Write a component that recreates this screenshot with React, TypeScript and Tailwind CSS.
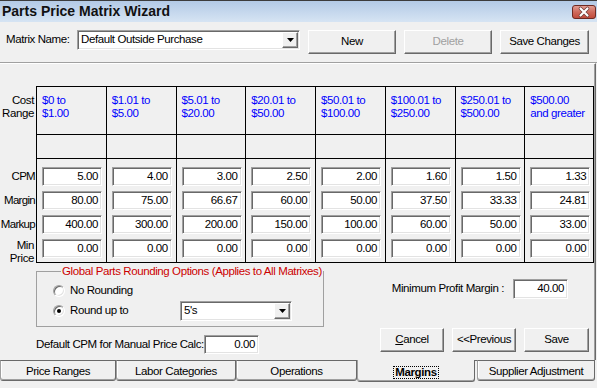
import type { ReactNode } from "react";

const sunken =
  "border border-t-[#a0a0a0] border-l-[#a0a0a0] border-b-white border-r-white bg-white shadow-[inset_1px_1px_0_#696969,inset_-1px_-1px_0_#e3e3e3]";
const raised =
  "border border-t-white border-l-white border-b-[#696969] border-r-[#696969] bg-[#f0f0f0] shadow-[inset_-1px_-1px_0_#a0a0a0]";

const ranges = [
  ["$0 to", "$1.00"],
  ["$1.01 to", "$5.00"],
  ["$5.01 to", "$20.00"],
  ["$20.01 to", "$50.00"],
  ["$50.01 to", "$100.00"],
  ["$100.01 to", "$250.00"],
  ["$250.01 to", "$500.00"],
  ["$500.00", "and greater"],
];

const cpm = ["5.00", "4.00", "3.00", "2.50", "2.00", "1.60", "1.50", "1.33"];
const margin = ["80.00", "75.00", "66.67", "60.00", "50.00", "37.50", "33.33", "24.81"];
const markup = ["400.00", "300.00", "200.00", "150.00", "100.00", "60.00", "50.00", "33.00"];
const minPrice = ["0.00", "0.00", "0.00", "0.00", "0.00", "0.00", "0.00", "0.00"];

function NumBox({ value, className = "" }: { value: string; className?: string }) {
  return (
    <div className={`${sunken} flex h-[19px] items-center justify-end pr-[3px] ${className}`}>
      {value}
    </div>
  );
}

function Button({ children, disabled, className = "" }: { children: ReactNode; disabled?: boolean; className?: string }) {
  return (
    <div
      className={`${raised} flex h-[24px] items-center justify-center ${disabled ? "text-[#a0a0a0]" : "text-black"} ${className}`}
    >
      {children}
    </div>
  );
}

function Combo({ value, className = "" }: { value: string; className?: string }) {
  return (
    <div className={`${sunken} flex h-[20px] items-center justify-between pl-[3px] pr-[1px] ${className}`}>
      <span>{value}</span>
      <div className={`${raised} flex h-[16px] w-[16px] items-center justify-center`}>
        <svg width="7" height="4" viewBox="0 0 7 4">
          <path d="M0 0h7L3.5 4z" fill="#000" />
        </svg>
      </div>
    </div>
  );
}

function Radio({ checked }: { checked?: boolean }) {
  return (
    <span className="flex h-[12px] w-[12px] items-center justify-center rounded-full border border-t-[#a0a0a0] border-l-[#a0a0a0] border-b-white border-r-white bg-white shadow-[inset_1px_1px_0_#696969,inset_-1px_-1px_0_#e3e3e3]">
      {checked ? <span className="h-[4px] w-[4px] rounded-full bg-black" /> : null}
    </span>
  );
}

function Tab({ label, width, selected }: { label: string; width: string; selected?: boolean }) {
  if (selected) {
    return (
      <div
        className={`${width} flex h-[22px] items-start justify-center rounded-b-[3px] border border-t-0 border-l-[#a0a0a0] border-r-[#696969] border-b-[#696969] bg-[#f0f0f0] pt-[6px] shadow-[inset_0_-1px_0_#a0a0a0]`}
      >
        <span className="border border-dotted border-black px-[1px] leading-[11px] font-bold">{label}</span>
      </div>
    );
  }
  return (
    <div
      className={`${width} flex h-[21px] items-start justify-center rounded-b-[3px] border border-t-[#696969] border-l-[#a0a0a0] border-r-[#696969] border-b-[#696969] bg-[#f0f0f0] pt-[4px] leading-[13px] shadow-[inset_0_-1px_0_#a0a0a0,inset_1px_0_0_white]`}
    >
      {label}
    </div>
  );
}

export default function App() {
  const labelRows = ["CPM", "Margin", "Markup"];

  return (
    <div
      className="h-[388px] w-[597px] overflow-hidden bg-[#f0f0f0] text-[11.5px] tracking-[-0.4px] text-black"
      style={{ fontFamily: '"Liberation Sans", Arial, sans-serif' }}
    >
      {/* title bar */}
      <div className="flex h-[22px] items-center justify-between border-t border-t-[#3c3c3c] bg-gradient-to-b from-[#b3cae6] to-[#d6e4f3] pl-[2px] pr-[1px]">
        <span className="text-[14px] font-bold tracking-normal text-[#111]">Parts Price Matrix Wizard</span>
        <svg width="24" height="14" viewBox="0 0 24 14">
          <defs>
            <linearGradient id="cl" x1="0" y1="0" x2="0" y2="1">
              <stop offset="0" stopColor="#e3a196" />
              <stop offset="0.5" stopColor="#cf6a5c" />
              <stop offset="1" stopColor="#c0493a" />
            </linearGradient>
          </defs>
          <rect x="0.5" y="0.5" width="23" height="13" rx="2.5" fill="url(#cl)" stroke="#6e2a22" />
          <path d="M8.5 3.5 15.5 10.5M15.5 3.5 8.5 10.5" stroke="#6e3a34" strokeWidth="3.6" strokeLinecap="round" />
          <path d="M8.5 3.5 15.5 10.5M15.5 3.5 8.5 10.5" stroke="#fff" strokeWidth="2.2" strokeLinecap="round" />
        </svg>
      </div>

      {/* matrix name row */}
      <div className="flex h-[40px] items-start pl-[6px] pt-[8px]">
        <span className="flex h-[20px] w-[71px] items-center">Matrix Name:</span>
        <Combo value="Default Outside Purchase" className="w-[223px]" />
        <Button className="ml-[8px] w-[88px]">New</Button>
        <Button disabled className="ml-[8px] w-[88px]">
          Delete
        </Button>
        <Button className="ml-[8px] w-[89px]">Save Changes</Button>
      </div>

      {/* main panel */}
      <div className="w-[597px] border-t border-t-[#a0a0a0]">
        <div className="w-[596px] border-t border-t-white border-r border-r-[#696969] pt-[22px] shadow-[inset_-1px_0_0_#a0a0a0]">
          <div className="grid w-[594px] grid-cols-[36px_repeat(8,minmax(0,1fr))]">
            <div className="flex flex-col">
              <div className="h-[48px] pr-[2px] pt-[8px] text-right leading-[13px]">
                Cost
                <br />
                Range
              </div>
              <div className="h-[24px]" />
              <div className="flex h-[105px] flex-col gap-[5px] pt-[9px]">
                {labelRows.map((l) => (
                  <div key={l} className="flex h-[19px] items-center justify-end pr-[1px] tracking-[-0.7px]">
                    {l}
                  </div>
                ))}
                <div className="h-[19px] pr-[2px] text-right leading-[13px]">
                  Min
                  <br />
                  Price
                </div>
              </div>
            </div>
            {ranges.map((r, i) => (
              <div key={i} className={`flex flex-col border-l border-black ${i === 7 ? "border-r" : ""}`}>
                <div className="h-[48px] border-t border-black pl-[5px] pt-[7px] leading-[13px] text-[#0000ff]">
                  {r[0]}
                  <br />
                  {r[1]}
                </div>
                <div className="h-[24px] border-t border-black" />
                <div className="flex h-[105px] flex-col gap-[5px] border-t border-b border-black pt-[8px]">
                  {[cpm, margin, markup, minPrice].map((row, j) => (
                    <NumBox key={j} value={row[i]} className="ml-[5px] w-[60px]" />
                  ))}
                </div>
              </div>
            ))}
          </div>

          {/* lower section */}
          <div className="flex h-[97px] w-[594px]">
            <div className="w-[308px] pl-[36px]">
              <fieldset className="mt-[2px] h-[62px] w-[272px] border border-[#a0a0a0] pl-[16px]">
                <legend className="ml-[8px] whitespace-nowrap px-[1px] leading-[13px] text-[#cc0000]">
                  Global Parts Rounding Options (Applies to All Matrixes)
                </legend>
                <div className="mt-[3px] flex h-[20px] items-center gap-[5px]">
                  <Radio />
                  <span>No Rounding</span>
                </div>
                <div className="flex h-[20px] items-center">
                  <Radio checked />
                  <span className="ml-[5px] w-[110px]">Round up to</span>
                  <Combo value="5's" className="h-[19px] w-[112px]" />
                </div>
              </fieldset>
              <div className="mt-[8px] flex h-[19px] items-center">
                <span className="w-[168px]">Default CPM for Manual Price Calc:</span>
                <NumBox value="0.00" className="w-[55px]" />
              </div>
            </div>
            <div className="flex-1">
              <div className="mt-[16px] flex items-center justify-end gap-[9px] pr-[26px]">
                <span>Minimum Profit Margin :</span>
                <NumBox value="40.00" className="h-[20px] w-[55px]" />
              </div>
              <div className="mt-[29px] flex justify-end gap-[8px] pr-[5px]">
                <Button className="w-[64px]">
                  <span>
                    <span className="underline">C</span>ancel
                  </span>
                </Button>
                <Button className="w-[64px]">&lt;&lt;Previous</Button>
                <Button className="w-[65px]">Save</Button>
              </div>
            </div>
          </div>
        </div>
      </div>

      {/* tabs */}
      <div className="flex items-start">
        <Tab label="Price Ranges" width="w-[116px]" />
        <Tab label="Labor Categories" width="w-[120px]" />
        <Tab label="Operations" width="w-[121px]" />
        <Tab label="Margins" width="w-[118px]" selected />
        <div className="h-[1px] w-[2px] bg-[#696969]" />
        <Tab label="Supplier Adjustment" width="w-[118px]" />
      </div>
    </div>
  );
}
